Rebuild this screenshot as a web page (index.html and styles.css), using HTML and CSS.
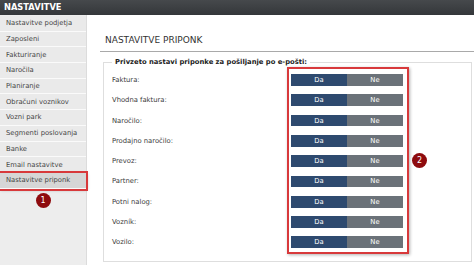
FILE: index.html
```html
<!DOCTYPE html>
<html lang="sl">
<head>
<meta charset="utf-8">
<title>Nastavitve priponk</title>
<link rel="stylesheet" href="styles.css">
</head>
<body>
<header class="topbar"><span class="topbar-title">NASTAVITVE</span></header>
<div class="layout">
  <aside class="sidebar">
    <ul class="menu">
      <li class="menu-item">Nastavitve podjetja</li>
      <li class="menu-item">Zaposleni</li>
      <li class="menu-item">Fakturiranje</li>
      <li class="menu-item">Naročila</li>
      <li class="menu-item">Planiranje</li>
      <li class="menu-item">Obračuni voznikov</li>
      <li class="menu-item">Vozni park</li>
      <li class="menu-item">Segmenti poslovanja</li>
      <li class="menu-item">Banke</li>
      <li class="menu-item">Email nastavitve</li>
      <li class="menu-item is-active">Nastavitve priponk</li>
    </ul>
    <span class="badge badge-side">1</span>
  </aside>
  <main class="content">
    <h1 class="page-title">NASTAVITVE PRIPONK</h1>
    <fieldset class="settings">
      <legend class="settings-legend">Privzeto nastavi priponke za pošiljanje po e-pošti:</legend>
      <div class="settings-body">
        <div class="labels">
          <div class="row">Faktura:</div>
          <div class="row">Vhodna faktura:</div>
          <div class="row">Naročilo:</div>
          <div class="row">Prodajno naročilo:</div>
          <div class="row">Prevoz:</div>
          <div class="row">Partner:</div>
          <div class="row">Potni nalog:</div>
          <div class="row">Vozník:</div>
          <div class="row">Vozilo:</div>
        </div>
        <div class="toggles">
          <div class="row"><div class="toggle"><span class="seg seg-yes">Da</span><span class="seg seg-no">Ne</span></div></div>
          <div class="row"><div class="toggle"><span class="seg seg-yes">Da</span><span class="seg seg-no">Ne</span></div></div>
          <div class="row"><div class="toggle"><span class="seg seg-yes">Da</span><span class="seg seg-no">Ne</span></div></div>
          <div class="row"><div class="toggle"><span class="seg seg-yes">Da</span><span class="seg seg-no">Ne</span></div></div>
          <div class="row"><div class="toggle"><span class="seg seg-yes">Da</span><span class="seg seg-no">Ne</span></div></div>
          <div class="row"><div class="toggle"><span class="seg seg-yes">Da</span><span class="seg seg-no">Ne</span></div></div>
          <div class="row"><div class="toggle"><span class="seg seg-yes">Da</span><span class="seg seg-no">Ne</span></div></div>
          <div class="row"><div class="toggle"><span class="seg seg-yes">Da</span><span class="seg seg-no">Ne</span></div></div>
          <div class="row"><div class="toggle"><span class="seg seg-yes">Da</span><span class="seg seg-no">Ne</span></div></div>
        </div>
        <span class="badge badge-main">2</span>
      </div>
    </fieldset>
  </main>
</div>
</body>
</html>
```
FILE: styles.css
```css
* { box-sizing: border-box; }
html, body {
  margin: 0;
  padding: 0;
  background: #ffffff;
  font-family: "DejaVu Sans", Verdana, sans-serif;
  font-size: 6.8px;
  color: #3a3a3a;
  overflow: hidden;
}
.topbar {
  height: 15px;
  background: linear-gradient(#46494c, #34373a);
  display: flex;
  align-items: center;
  padding-left: 4px;
}
.topbar-title {
  color: #ffffff;
  font-weight: bold;
  font-size: 8.3px;
  line-height: 1;
}
.layout {
  display: flex;
  height: 250px;
}
.sidebar {
  width: 87px;
  flex: none;
  background: #ededed;
  border-right: 1px solid #dcdcdc;
  padding-top: 1px;
  display: flex;
  flex-direction: column;
  align-items: flex-start;
}
.menu {
  list-style: none;
  margin: 0;
  padding: 0;
  width: 86px;
}
.menu-item {
  height: 15.7px;
  border-bottom: 1px solid #fafafa;
  background: #eaeaea;
  padding-left: 6px;
  display: flex;
  align-items: center;
  color: #454545;
  white-space: nowrap;
}
.menu-item.is-active {
  background: #d6d6d6;
  outline: 2px solid #d8393b;
  outline-offset: 0;
  box-shadow: 1px 1px 3px rgba(0,0,0,0.35);
  position: relative;
}
.badge {
  width: 15px;
  height: 15px;
  border-radius: 50%;
  background: #8e0b0e;
  color: #ffffff;
  font-size: 8px;
  display: flex;
  align-items: center;
  justify-content: center;
  flex: none;
}
.badge-side {
  margin-top: 4px;
  margin-left: 35.5px;
}
.content {
  flex: 1;
  min-width: 0;
  padding-top: 20px;
}
.page-title {
  margin: 0 0 0 13px;
  padding: 0 0 5px 5px;
  font-size: 9px;
  line-height: 11px;
  font-weight: normal;
  color: #333333;
  border-bottom: 1px solid #a9a9a9;
  white-space: nowrap;
}
.settings {
  margin: 5px 2px 0 16px;
  padding: 0 0 7px 8px;
  border: 1px solid #dedede;
  min-width: 0;
}
.settings-legend {
  padding: 0 3px;
  font-weight: bold;
  line-height: 10px;
  color: #222222;
  white-space: nowrap;
}
.settings-body {
  display: flex;
  align-items: center;
}
.labels {
  width: 175px;
  flex: none;
  padding-top: 2.8px;
  align-self: flex-start;
}
.row {
  height: 20.3px;
  display: flex;
  align-items: center;
  white-space: nowrap;
}
.toggles {
  border: 2px solid #d8393b;
  box-shadow: 1px 1px 3px rgba(0,0,0,0.3);
  padding: 0.8px 4px 0 2px;
  align-self: flex-start;
}
.toggle {
  display: flex;
  height: 11.7px;
  width: 112px;
}
.seg {
  flex: 1;
  display: flex;
  align-items: center;
  justify-content: center;
  color: #ffffff;
}
.seg-yes { background: #2e4a6f; }
.seg-no { background: #6b7279; }
.badge-main {
  margin-left: 3px;
}
```
